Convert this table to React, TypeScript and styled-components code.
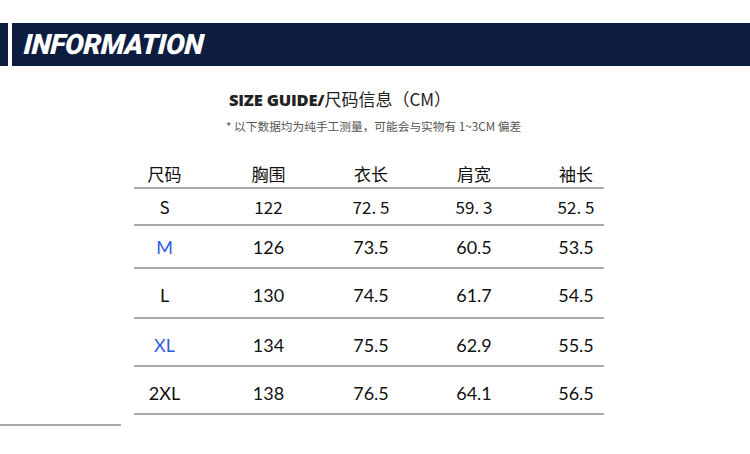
import React from "react";
import styled, { createGlobalStyle } from "styled-components";

const GlobalStyle = createGlobalStyle`
  html, body {
    margin: 0;
    padding: 0;
    background: #ffffff;
  }
  body {
    width: 750px;
    height: 454px;
    overflow: hidden;
    font-family: "Noto Sans CJK SC", "Noto Sans", sans-serif;
  }
`;

const Page = styled.div`
  box-sizing: border-box;
  width: 750px;
  height: 454px;
  padding-top: 23px;
  background: #fff;
`;

const Banner = styled.div`
  display: flex;
  height: 43px;
  gap: 4px;
`;

const BannerEdge = styled.div`
  width: 8px;
  background: #0d1d3f;
`;

const BannerBar = styled.div`
  flex: 1;
  display: flex;
  align-items: center;
  padding-left: 12px;
  background: #0d1d3f;
`;

const BannerTitle = styled.h1`
  margin: 0;
  color: #ffffff;
  font-family: Roboto, "Liberation Sans", sans-serif;
  font-size: 28px;
  font-weight: 900;
  font-style: italic;
  letter-spacing: -0.3px;
  line-height: 1;
  transform: skewX(-4deg);
`;

const Intro = styled.div`
  padding-left: 226px;
  margin-top: 22px;
`;

const Heading = styled.div`
  padding-left: 3px;
  line-height: 22px;
  color: #222;
`;

const HeadingLatin = styled.span`
  font-family: "Open Sans", "Noto Sans", sans-serif;
  font-size: 16.5px;
  font-weight: 800;
  letter-spacing: -0.2px;
`;

const HeadingCjk = styled.span`
  font-family: "Noto Sans CJK SC", sans-serif;
  font-size: 17px;
  font-weight: 400;
`;

const Note = styled.div`
  margin-top: 7px;
  font-size: 11.7px;
  line-height: 16px;
  color: #555;
`;

const Table = styled.div`
  margin: 24px 0 0 134px;
  width: 470px;
`;

const Row = styled.div<{ $h: number; $pt?: number }>`
  display: grid;
  grid-template-columns: 83px 103px 102px 104px 78px;
  align-items: center;
  box-sizing: border-box;
  height: ${(p) => p.$h}px;
  padding-top: ${(p) => p.$pt ?? 0}px;
  border-bottom: 2px solid #a9a9a9;
`;

const Cell = styled.div<{ $cjk?: boolean; $blue?: boolean }>`
  text-align: center;
  font-family: ${(p) =>
    p.$cjk ? `"Noto Sans CJK SC", sans-serif` : `Lato, "Open Sans", sans-serif`};
  font-size: ${(p) => (p.$cjk ? 17 : 18)}px;
  line-height: 22px;
  color: ${(p) => (p.$blue ? "#2f5de6" : "#111")};

  &:first-child {
    padding-right: 22px;
  }
  &:last-child {
    padding-left: 22px;
  }
`;

const Footer = styled.div`
  margin-top: 9px;
  width: 121px;
  border-top: 2px solid #a9a9a9;
`;

const rows = [
  { size: "S", vals: ["122", "72. 5", "59. 3", "52. 5"], h: 37, pt: 0, cjk: true },
  { size: "M", vals: ["126", "73.5", "60.5", "53.5"], h: 43, pt: 0, blue: true },
  { size: "L", vals: ["130", "74.5", "61.7", "54.5"], h: 50, pt: 4 },
  { size: "XL", vals: ["134", "75.5", "62.9", "55.5"], h: 48, pt: 5, blue: true },
  { size: "2XL", vals: ["138", "76.5", "64.1", "56.5"], h: 48, pt: 5 },
];

export default function App() {
  return (
    <Page>
      <GlobalStyle />
      <Banner>
        <BannerEdge />
        <BannerBar>
          <BannerTitle>INFORMATION</BannerTitle>
        </BannerBar>
      </Banner>

      <Intro>
        <Heading>
          <HeadingLatin>SIZE GUIDE/</HeadingLatin>
          <HeadingCjk>尺码信息（CM）</HeadingCjk>
        </Heading>
        <Note>* 以下数据均为纯手工测量，可能会与实物有 1~3CM 偏差</Note>
      </Intro>

      <Table>
        <Row $h={31} $pt={3}>
          {["尺码", "胸围", "衣长", "肩宽", "袖长"].map((t) => (
            <Cell key={t} $cjk>
              {t}
            </Cell>
          ))}
        </Row>
        {rows.map((r) => (
          <Row key={r.size} $h={r.h} $pt={r.pt}>
            <Cell $cjk={r.cjk} $blue={r.blue}>
              {r.size}
            </Cell>
            {r.vals.map((v, i) => (
              <Cell key={i} $cjk={r.cjk}>
                {v}
              </Cell>
            ))}
          </Row>
        ))}
      </Table>
      <Footer />
    </Page>
  );
}
